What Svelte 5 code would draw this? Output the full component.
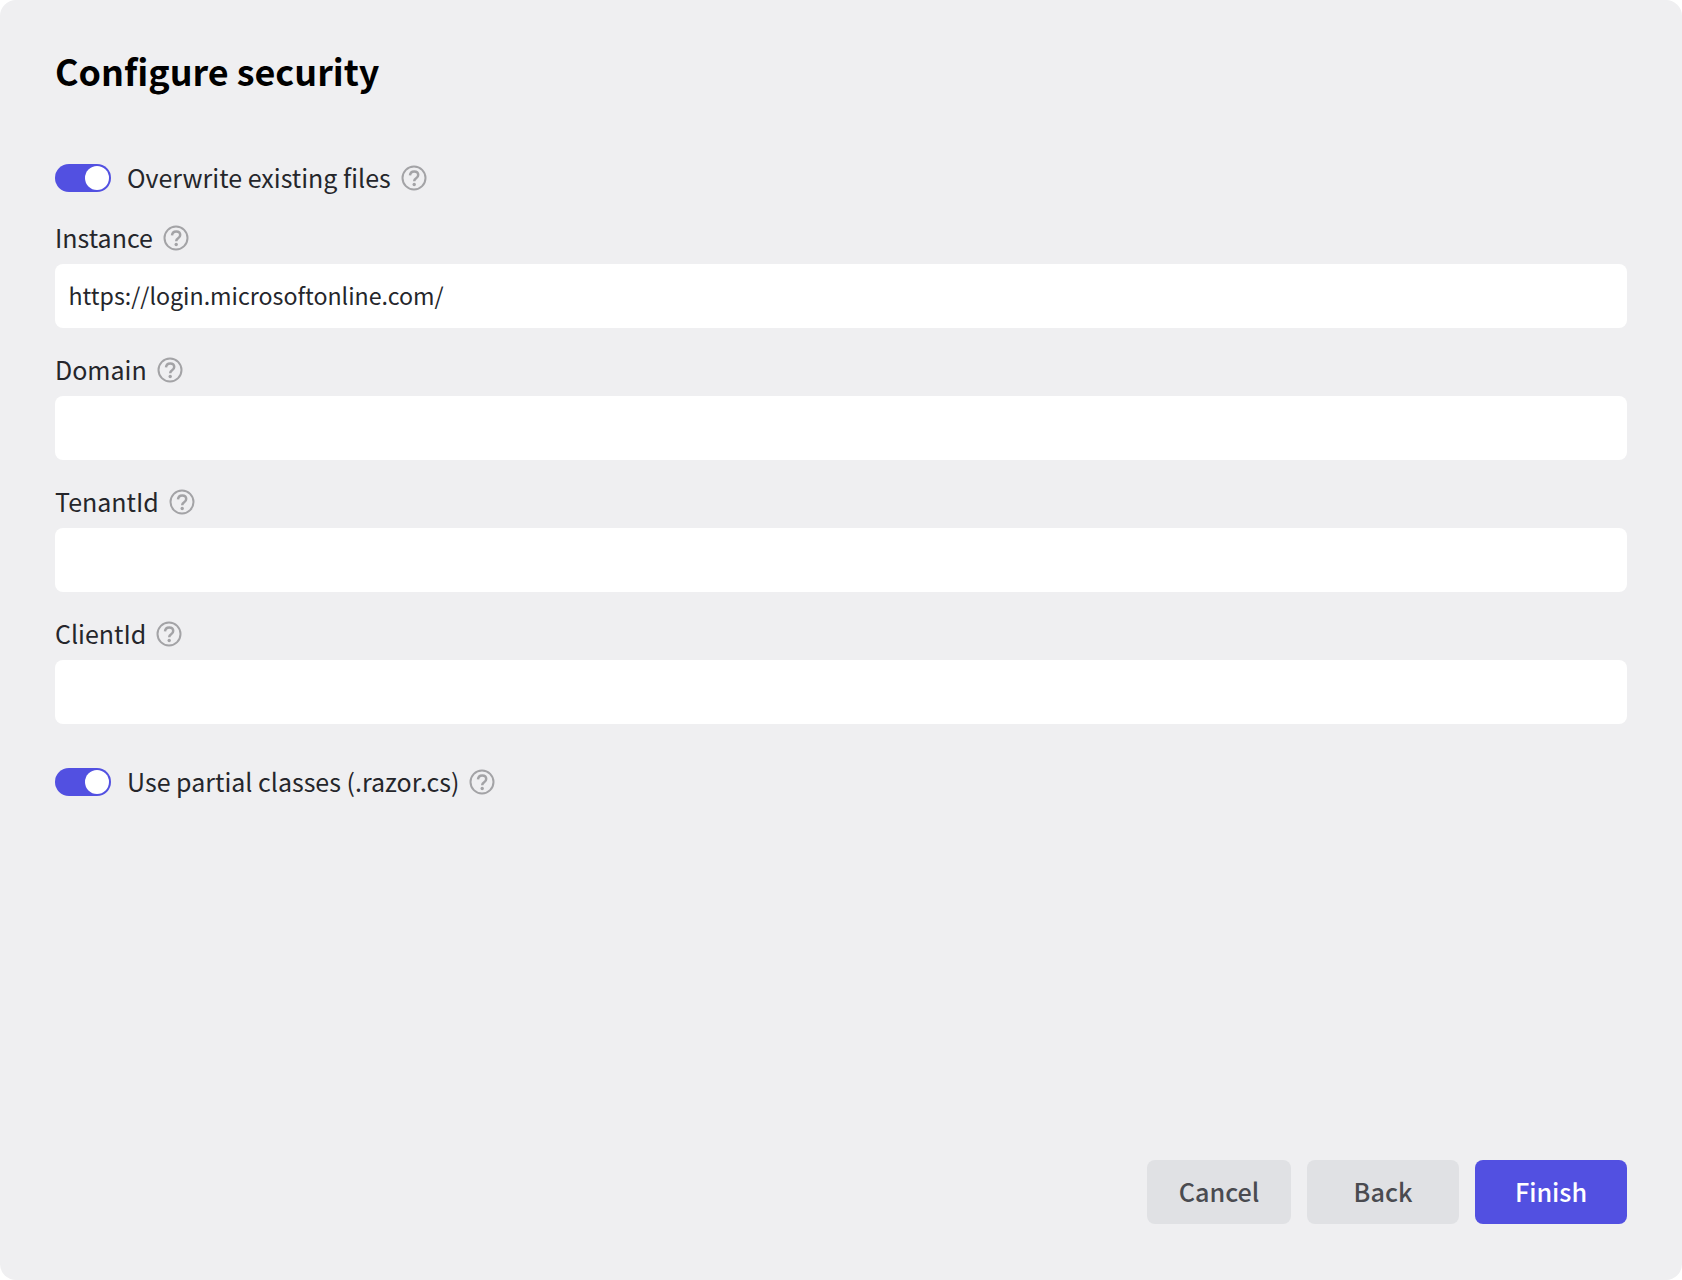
<script>
	const fields = [
		{ label: 'Instance', value: 'https://login.microsoftonline.com/' },
		{ label: 'Domain', value: '' },
		{ label: 'TenantId', value: '' },
		{ label: 'ClientId', value: '' }
	];
</script>

{#snippet help()}
	<svg class="help" width="26" height="26" viewBox="0 0 26 26" fill="none">
		<circle cx="13" cy="13" r="11.5" stroke="#a3a3a6" stroke-width="2" />
		<path d="M9 10.400c.2-2.500 1.900-4 4.200-4s4 1.400 4 3.500c0 1.700-1 2.500-2.100 3.300-1.200.8-1.900 1.500-1.900 3.100" stroke="#a3a3a6" stroke-width="2.500" />
		<circle cx="13.200" cy="19.500" r="1.700" fill="#a3a3a6" />
	</svg>
{/snippet}

{#snippet toggle(text)}
	<div class="toggle-row">
		<span class="toggle"><span class="knob"></span></span>
		<span class="toggle-label">{text}</span>
		{@render help()}
	</div>
{/snippet}

<div class="card">
	<h1>Configure security</h1>

	{@render toggle('Overwrite existing files')}

	{#each fields as field}
		<div class="field">
			<div class="label">
				<span class="label-text">{field.label}</span>
				{@render help()}
			</div>
			<input type="text" value={field.value} />
		</div>
	{/each}

	<div class="second-toggle">
		{@render toggle('Use partial classes (.razor.cs)')}
	</div>

	<div class="actions">
		<button class="secondary cancel">Cancel</button>
		<button class="secondary back">Back</button>
		<button class="primary">Finish</button>
	</div>
</div>

<style>
	:global(body) {
		background: #fff;
	}
	.card {
		box-sizing: border-box;
		height: 1280px;
		padding: 44px 55px 56px;
		display: flex;
		flex-direction: column;
		background: #efeff1;
		border-radius: 16px;
		font-family: 'Noto Sans CJK JP', 'Noto Sans', sans-serif;
		color: #25262b;
	}
	h1 {
		margin: 0 0 64px;
		height: 52px;
		font-size: 35.9px;
		line-height: 52px;
		font-weight: 700;
		color: #000;
	}
	.toggle-row {
		display: flex;
		align-items: center;
		height: 36px;
		font-size: 25px;
	}
	.toggle {
		box-sizing: border-box;
		width: 56px;
		height: 28px;
		padding: 2px;
		display: flex;
		justify-content: flex-end;
		background: #5250e1;
		border-radius: 14px;
	}
	.knob {
		width: 24px;
		height: 24px;
		background: #fff;
		border-radius: 50%;
	}
	.toggle-label {
		margin-left: 16px;
		margin-right: 10px;
		padding-bottom: 2px;
	}
	.help {
		display: block;
		flex: none;
	}
	.field {
		margin-top: 22px;
	}
	.label {
		display: flex;
		align-items: center;
		gap: 10px;
		height: 40px;
		font-size: 25px;
		margin-bottom: 6px;
	}
	.label-text {
		padding-bottom: 2px;
	}
	input {
		display: block;
		box-sizing: border-box;
		width: 100%;
		height: 64px;
		padding: 0 14px 2px 13.500px;
		border: none;
		outline: none;
		border-radius: 8px;
		background: #fff;
		font: inherit;
		font-size: 23.2px;
		color: #25262b;
	}
	.second-toggle {
		margin-top: 40px;
	}
	.actions {
		margin-top: auto;
		display: flex;
		justify-content: flex-end;
		gap: 16px;
	}
	button {
		box-sizing: border-box;
		height: 64px;
		border: none;
		border-radius: 8px;
		font: inherit;
		font-size: 25.2px;
		font-weight: 500;
		padding: 0 0 2px;
	}
	.secondary {
		background: #e0e1e4;
		color: #4a4b50;
	}
	.cancel {
		width: 144px;
	}
	.back {
		width: 152px;
	}
	.primary {
		width: 152px;
		background: #5250e1;
		color: #fff;
	}
</style>
